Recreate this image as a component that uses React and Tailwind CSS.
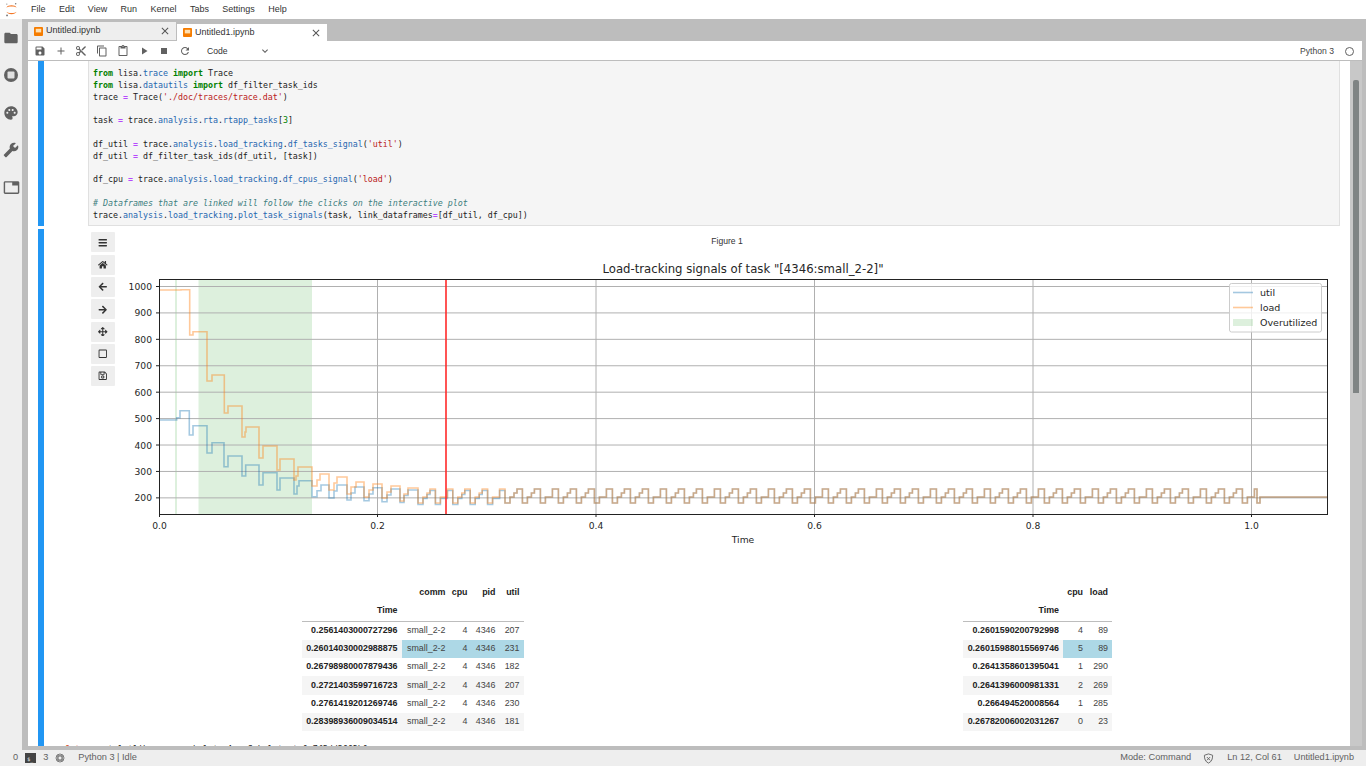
import {
  MdFolder, MdPalette, MdBuild, MdTab, MdSave, MdAdd, MdContentCut, MdContentCopy, MdContentPaste, MdPlayArrow, MdStop, MdRefresh, MdExpandMore, MdClose,
} from 'react-icons/md'
import { FaBars, FaHome, FaArrowLeft, FaArrowRight, FaArrowsAlt, FaRegSquare, FaRegSave } from 'react-icons/fa'

// step traces in page pixels: [x where the level starts, y of the level]
const loadHead = [
  [159, 290], [181, 289.7], [189.7, 335], [193, 331.7], [207, 381], [212, 375], [224.3, 413], [228, 406],
  [242, 437], [245, 432], [246, 427], [259, 458], [263, 446], [277, 470], [280, 459], [294, 480], [296, 476],
  [298, 467], [312, 486], [317, 480], [320, 474], [329, 490], [334, 483], [337, 477], [347, 494], [351, 487],
  [356, 482], [364, 497], [369, 490], [373, 484], [382, 498], [387, 492], [391, 486], [400, 501], [404, 494],
  [408, 488],
]
const utilHead = [
  [159, 420], [176.7, 417.7], [180, 410.7], [189.3, 435], [193, 425.7], [207, 453], [212, 442.7], [224, 466.7],
  [228, 456], [242, 476], [245.7, 465], [259, 485], [263, 472.7], [277, 490], [280, 478], [294, 494], [297, 486],
  [299, 480.7], [312, 496.7], [317, 490.7], [321, 485], [329, 498], [334, 491], [337, 485], [347, 500], [351, 493],
  [355, 487], [364, 500.7], [369, 494], [373, 487.7], [382, 501.7], [387, 495], [391, 489], [400, 502.5], [404, 495.5],
  [408, 490],
]

function periodic(offset) {
  const pts = []
  let x = 418
  let i = 0
  while (x < 1245) {
    const off = x < 500 ? offset : 0
    pts.push([x, 503 + off], [x + 5, 497 + off], [x + 9, i % 3 === 1 ? 497 + off : 493 + off], [x + 12, 489 + off])
    x += x < 522 ? 17.4 : 18
    i++
  }
  pts.push([1257, 503], [1260, 497], [1327, 497])
  return pts
}

function stepPath(pts) {
  let d = `M${pts[0][0]} ${pts[0][1]}`
  for (let i = 1; i < pts.length; i++) {
    d += `H${pts[i][0]}V${pts[i][1]}`
  }
  return d
}

const yTicks = [1000, 900, 800, 700, 600, 500, 400, 300, 200]
const xTicks = [['0.0', 159.5], ['0.2', 377.5], ['0.4', 596], ['0.6', 814.5], ['0.8', 1033], ['1.0', 1251.5]]

function Plot() {
  return (
    <svg viewBox="120 255 1214 295" width="1214" height="295" className="block" fontFamily="'DejaVu Sans', sans-serif" fill="#262626">
      <rect x="175" y="279" width="2" height="235" fill="#2ca02c" opacity="0.16" />
      <rect x="198.5" y="279" width="113.5" height="235" fill="#2ca02c" opacity="0.16" />
      {yTicks.map((t, i) => {
        const y = 286.5 + i * 26.42
        return (
          <g key={t}>
            <line x1="159" x2="1327" y1={y} y2={y} stroke="#b0b0b0" strokeWidth="1" />
            <line x1="156" x2="159" y1={y} y2={y} stroke="#222" strokeWidth="1" />
            <text x="152" y={y + 3.5} fontSize="9.2" textAnchor="end">{t}</text>
          </g>
        )
      })}
      {xTicks.map(([t, x]) => (
        <g key={t}>
          {t !== '0.0' && <line x1={x} x2={x} y1="279" y2="514" stroke="#b0b0b0" strokeWidth="1" />}
          <line x1={x} x2={x} y1="514" y2="517" stroke="#222" strokeWidth="1" />
          <text x={x} y="528.5" fontSize="9.2" textAnchor="middle">{t}</text>
        </g>
      ))}
      <path d={stepPath([...utilHead, ...periodic(1.5)])} fill="none" stroke="#1f77b4" strokeWidth="1.6" opacity="0.4" />
      <path d={stepPath([...loadHead, ...periodic(0)])} fill="none" stroke="#ff7f0e" strokeWidth="1.6" opacity="0.42" />
      <line x1="446" x2="446" y1="279" y2="514" stroke="#ff2a2a" strokeWidth="1.6" />
      <rect x="159.5" y="279.5" width="1168" height="235" fill="none" stroke="#222" strokeWidth="1" />
      <text x="743" y="273" fontSize="11.7" textAnchor="middle">Load-tracking signals of task "[4346:small_2-2]"</text>
      <text x="743" y="542.5" fontSize="9.2" textAnchor="middle">Time</text>
      <rect x="1229.5" y="283.5" width="92" height="48.5" rx="2" fill="#fff" fillOpacity="0.8" stroke="#ccc" />
      <line x1="1233" x2="1253" y1="292.5" y2="292.5" stroke="#1f77b4" strokeWidth="1.6" opacity="0.4" />
      <line x1="1233" x2="1253" y1="307.5" y2="307.5" stroke="#ff7f0e" strokeWidth="1.6" opacity="0.42" />
      <rect x="1233" y="319" width="20" height="7" fill="#2ca02c" opacity="0.16" />
      <text x="1260" y="296" fontSize="9.5">util</text>
      <text x="1260" y="311" fontSize="9.5">load</text>
      <text x="1260" y="326" fontSize="9.5">Overutilized</text>
    </svg>
  )
}

const K = ({ children }) => <span className="font-bold text-[#008000]">{children}</span>
const P = ({ children }) => <span className="text-[#2566b0]">{children}</span>
const O = ({ children }) => <span className="text-[#aa22ff]">{children}</span>
const S = ({ children }) => <span className="text-[#ba2121]">{children}</span>
const N = ({ children }) => <span className="text-[#008000]">{children}</span>

function Code() {
  return (
    <pre className="font-['DejaVu_Sans_Mono',monospace] text-[8.3px] leading-[11.8px] text-[#222] pl-[4px] pt-[7px] pb-[4px]">
      <K>from</K> lisa.<P>trace</P> <K>import</K> Trace{'\n'}
      <K>from</K> lisa.<P>datautils</P> <K>import</K> df_filter_task_ids{'\n'}
      trace <O>=</O> Trace(<S>'./doc/traces/trace.dat'</S>){'\n'}
      {'\n'}
      task <O>=</O> trace.<P>analysis</P>.<P>rta</P>.<P>rtapp_tasks</P>[<N>3</N>]{'\n'}
      {'\n'}
      df_util <O>=</O> trace.<P>analysis</P>.<P>load_tracking</P>.<P>df_tasks_signal</P>(<S>'util'</S>){'\n'}
      df_util <O>=</O> df_filter_task_ids(df_util, [task]){'\n'}
      {'\n'}
      df_cpu <O>=</O> trace.<P>analysis</P>.<P>load_tracking</P>.<P>df_cpus_signal</P>(<S>'load'</S>){'\n'}
      {'\n'}
      <span className="italic text-[#408080]"># Dataframes that are linked will follow the clicks on the interactive plot</span>{'\n'}
      trace.<P>analysis</P>.<P>load_tracking</P>.<P>plot_task_signals</P>(task, link_dataframes<O>=</O>[df_util, df_cpu])
    </pre>
  )
}

function Tab({ name, active }) {
  return (
    <div className={active ? 'flex h-[17px] w-[150px] items-center bg-white pl-[6px] pr-[5px]' : 'flex h-[18px] w-[148px] items-center bg-[#eeeeee] pl-[6px] pr-[5px] mb-[1px]'}>
      <svg viewBox="0 0 10 10" className="h-[9px] w-[9px] shrink-0">
        <rect width="10" height="10" rx="1" fill="#f57c00" />
        <rect x="2" y="2" width="6" height="4" fill="#ffe0b2" />
      </svg>
      <span className="ml-[3px] flex-1 text-[9px] text-[#333]">{name}</span>
      <MdClose className="text-[12px] text-[#555]" />
    </div>
  )
}

const figButtons = [FaBars, FaHome, FaArrowLeft, FaArrowRight, FaArrowsAlt, FaRegSquare, FaRegSave]

function DataTable({ cols, widths, rows, activeRow }) {
  return (
    <table className="table-fixed border-collapse text-[8.9px] text-[#444]" style={{ width: widths.reduce((a, b) => a + b, 0) }}>
      <colgroup>
        {widths.map((w, i) => <col key={i} style={{ width: w }} />)}
      </colgroup>
      <thead className="font-bold text-[#222]">
        <tr className="h-[18px]">
          <th />
          {cols.map((c) => <th key={c} className="pr-[4px] text-right font-bold">{c}</th>)}
        </tr>
        <tr className="h-[20px] border-b border-[#bdbdbd]">
          <th className="pr-[4px] text-right font-bold">Time</th>
          {cols.map((c) => <th key={c} />)}
        </tr>
      </thead>
      <tbody>
        {rows.map((row, i) => (
          <tr key={row[0]} className={i % 2 === 1 ? 'h-[18.3px] bg-[#f5f5f5]' : 'h-[18.3px]'}>
            <th className="pr-[4px] text-right font-bold text-[#222]">{row[0]}</th>
            {row.slice(1).map((v, j) => (
              <td key={j} className={i === activeRow ? 'bg-[#add8e6] pr-[4px] text-right' : 'pr-[4px] text-right'}>{v}</td>
            ))}
          </tr>
        ))}
      </tbody>
    </table>
  )
}

const utilRows = [
  ['0.2561403000727296', 'small_2-2', 4, 4346, 207],
  ['0.26014030002988875', 'small_2-2', 4, 4346, 231],
  ['0.26798980007879436', 'small_2-2', 4, 4346, 182],
  ['0.2721403599716723', 'small_2-2', 4, 4346, 207],
  ['0.2761419201269746', 'small_2-2', 4, 4346, 230],
  ['0.28398936009034514', 'small_2-2', 4, 4346, 181],
]
const cpuRows = [
  ['0.2601590200792998', 4, 89],
  ['0.26015988015569746', 5, 89],
  ['0.2641358601395041', 1, 290],
  ['0.2641396000981331', 2, 269],
  ['0.266494520008564', 1, 285],
  ['0.26782006002031267', 0, 23],
]

function Logo() {
  return (
    <svg viewBox="0 0 14 16" className="ml-[5px] h-[15px] w-[13px]">
      <path d="M1.5 6C3 2.6 11 2.6 12.5 6C11 4.2 3 4.2 1.5 6Z" fill="#f37726" />
      <path d="M1.5 10.5C3 13.9 11 13.9 12.5 10.5C11 12.3 3 12.3 1.5 10.5Z" fill="#f37726" />
      <circle cx="11.5" cy="1.8" r="0.8" fill="#767677" />
      <circle cx="2.2" cy="14.4" r="1" fill="#767677" />
      <circle cx="2" cy="2.2" r="0.6" fill="#767677" />
    </svg>
  )
}

export default function App() {
  return (
    <div className="flex h-screen w-full flex-col overflow-hidden bg-white font-['Liberation_Sans',sans-serif] text-[#333]">
      {/* menu bar */}
      <div className="flex h-[19px] shrink-0 items-center bg-white">
        <Logo />
        <div className="ml-[13px] flex gap-[13.4px] text-[9px] text-[#333]">
          {['File', 'Edit', 'View', 'Run', 'Kernel', 'Tabs', 'Settings', 'Help'].map((m) => <span key={m}>{m}</span>)}
        </div>
      </div>

      <div className="flex min-h-0 flex-1">
        {/* left rail */}
        <div className="flex w-[22px] shrink-0 flex-col items-center gap-[21.3px] bg-[#eeeeee] pt-[11px] text-[#616161]">
          <MdFolder className="text-[16px]" />
          <svg viewBox="0 0 16 16" className="h-4 w-4">
            <circle cx="8" cy="8" r="7" fill="#616161" />
            <rect x="4.5" y="4.5" width="7" height="7" rx="1" fill="#e0e0e0" />
          </svg>
          <MdPalette className="text-[16px]" />
          <MdBuild className="text-[16px] scale-x-[-1]" />
          <MdTab className="text-[17px]" />
        </div>

        {/* main dock */}
        <div className="flex min-w-0 flex-1 flex-col bg-[#bdbdbd] pb-[4px] pl-[6px] pr-[4px] pt-[4px]">
          <div className="flex h-[18px] shrink-0 items-end gap-[1px]">
            <Tab name="Untitled.ipynb" />
            <Tab name="Untitled1.ipynb" active />
          </div>

          <div className="flex h-[20px] shrink-0 items-center border-b border-[#bdbdbd] bg-white pl-[6px] pr-[8px] pt-[1px] text-[#616161]">
            <div className="flex w-[157px] items-center justify-between text-[12px]">
              <MdSave />
              <MdAdd />
              <MdContentCut />
              <MdContentCopy />
              <MdContentPaste />
              <MdPlayArrow />
              <MdStop />
              <MdRefresh />
            </div>
            <span className="ml-[16px] w-[52px] text-[8.6px] text-[#333]">Code</span>
            <MdExpandMore className="text-[12px]" />
            <span className="ml-auto text-[8.6px] text-[#444]">Python 3</span>
            <span className="ml-[11px] h-[9px] w-[9px] rounded-full border border-[#616161]" />
          </div>

          {/* notebook */}
          <div className="flex min-h-0 flex-1 overflow-hidden">
            <div className="min-w-0 flex-1 overflow-hidden bg-white">
              <div className="flex pl-[10px]">
                <div className="w-[6px] shrink-0 bg-[#2196f3]" />
                <div className="ml-[44px] mr-[10px] min-w-0 flex-1 border border-t-0 border-[#e0e0e0] bg-[#f5f5f5]">
                  <Code />
                </div>
              </div>

              <div className="mt-[3px] flex pl-[10px]">
                <div className="w-[6px] shrink-0 bg-[#2196f3]" />
                <div className="ml-[44px] min-w-0 flex-1">
                  <div className="flex">
                    <div className="ml-[3px] mt-[3px] flex w-[24px] shrink-0 flex-col gap-[2.3px]">
                      {figButtons.map((Icon, i) => (
                        <div key={i} className="flex h-[20px] items-center justify-center rounded-[1px] bg-[#eeeeee] text-[#333]">
                          <Icon className="text-[9.5px]" />
                        </div>
                      ))}
                    </div>
                    <div className="ml-[5px] w-[1214px] shrink-0">
                      <div className="flex h-[26px] items-center justify-center pb-[2px] text-[8.6px] text-[#333]">Figure 1</div>
                      <Plot />
                    </div>
                  </div>

                  <div className="ml-[12px] mt-[33px] grid w-[1250px] grid-cols-2">
                    <div className="flex justify-center">
                      <DataTable cols={['comm', 'cpu', 'pid', 'util']} widths={[100, 48, 22, 28, 24]} rows={utilRows} activeRow={1} />
                    </div>
                    <div className="flex justify-center">
                      <DataTable cols={['cpu', 'load']} widths={[100, 24, 25]} rows={cpuRows} activeRow={1} />
                    </div>
                  </div>

                  <div className="mt-[13px] flex font-['DejaVu_Sans_Mono',monospace] text-[8.3px] leading-[11.8px] text-[#222]">
                    <span className="-ml-[23px] w-[28px] shrink-0 text-[#d84315]">Out</span>
                    <span>&lt;matplotlib.axes._subplots.AxesSubplot at 0x7f5dd3662b0&gt;</span>
                  </div>
                </div>
              </div>
            </div>

            {/* scrollbar */}
            <div className="w-[12px] shrink-0 bg-[#c8c8c8] pl-[3px] pt-[19px]">
              <div className="h-[313px] w-[6px] rounded-t-[2px] bg-[#7f8484]" />
            </div>
          </div>
        </div>
      </div>

      {/* status bar */}
      <div className="flex h-[16px] shrink-0 items-center bg-[#eeeeee] text-[#616161]">
        <span className="ml-[13px] text-[9.2px]">0</span>
        <span className="ml-[7px] flex h-[10px] w-[11px] items-end bg-[#444] pl-[2px] font-['DejaVu_Sans_Mono',monospace] text-[5px] leading-[8px] text-white">$_</span>
        <span className="ml-[7px] text-[9.2px]">3</span>
        <svg viewBox="0 0 12 12" className="ml-[7px] h-[10px] w-[10px]" fill="none" stroke="#616161">
          <circle cx="6" cy="6" r="4.8" strokeWidth="1" />
          <rect x="3.5" y="3.5" width="5" height="5" strokeWidth="1.4" />
        </svg>
        <span className="ml-[13px] text-[9.2px]">Python 3 | Idle</span>
        <span className="ml-auto text-[9.25px]">Mode: Command</span>
        <svg viewBox="0 0 12 12" className="ml-[11.5px] h-[11px] w-[11px]" fill="none" stroke="#616161" strokeWidth="1">
          <path d="M6 1L10.5 2.5C10.5 6.5 9.5 9.5 6 11C2.5 9.5 1.5 6.5 1.5 2.5Z" />
          <path d="M4.2 4.4L7.8 8M7.8 4.4L4.2 8" />
        </svg>
        <span className="ml-[13.5px] text-[9.2px]">Ln 12, Col 61</span>
        <span className="ml-[12px] mr-[12px] text-[9.1px]">Untitled1.ipynb</span>
      </div>
    </div>
  )
}
